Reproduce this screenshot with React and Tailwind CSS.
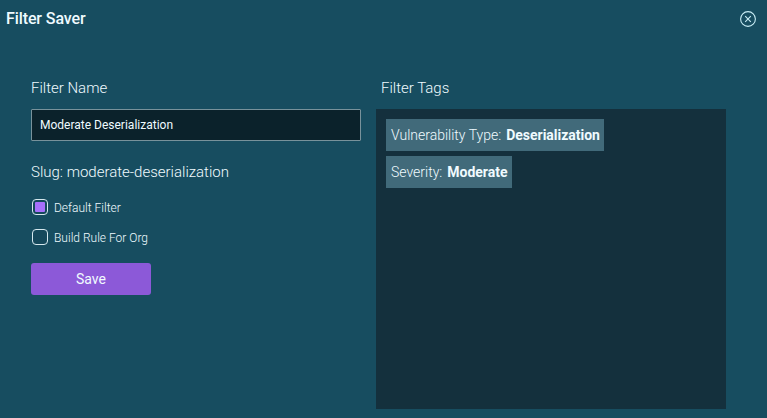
import React from "react";

function Check({ label, checked }) {
  return (
    <label className="flex h-4 items-center gap-1.5 text-[12px]">
      <span className="flex size-4 items-center justify-center rounded-[4px] border border-[#d5e8ee] bg-[#15485b]">
        {checked && <span className="size-[10px] rounded-[1px] bg-[#a76ffb]" />}
      </span>
      <span className="pt-px">{label}</span>
    </label>
  );
}

function Tag({ name, value }) {
  return (
    <div className="flex h-8 items-center gap-[5px] whitespace-nowrap bg-[#416a7a] pl-[5px] pr-[4.5px] text-[14px]">
      <span>{name}:</span>
      <span className="font-bold tracking-[-0.01px]">{value}</span>
    </div>
  );
}

export default function App() {
  return (
    <div className="flex h-[418px] w-[767px] flex-col overflow-hidden bg-[#174d60] font-['Roboto','Liberation_Sans',sans-serif] font-light text-[#f0fbff]">
      <header className="flex h-[38px] items-center justify-between pl-1.5 pr-[11px]">
        <h1 className="text-[16px] font-medium tracking-[-0.1px]">Filter Saver</h1>
        <svg className="size-4" viewBox="0 0 16 16" fill="none" stroke="#c9edf5" strokeWidth="1.1">
          <circle cx="8" cy="8" r="7.4" />
          <path d="M5.2 5.2l5.6 5.6M10.8 5.2l-5.6 5.6" />
        </svg>
      </header>
      <main className="flex pl-[31px] pt-[38px]">
        <section className="w-[330px]">
          <h2 className="h-[33px] text-[15px] leading-6">Filter Name</h2>
          <input
            className="block h-8 w-full rounded-[1px] border border-[#78929b] bg-[#0b222b] px-2 text-[12px] font-normal outline-none"
            defaultValue="Moderate Deserialization"
          />
          <p className="mt-[19px] text-[15px] leading-6">Slug: moderate-deserialization</p>
          <div className="mt-[15px] flex flex-col gap-[14px] pl-px">
            <Check label="Default Filter" checked />
            <Check label="Build Rule For Org" />
          </div>
          <button className="mt-[18px] block h-8 w-[120px] rounded-[3px] bg-[#8c59d8] text-[14px] font-normal">Save</button>
        </section>
        <section className="ml-[15px] w-[350px]">
          <h2 className="h-[33px] pl-[5px] text-[15px] leading-6">Filter Tags</h2>
          <div className="flex h-[300px] flex-col items-start gap-[5px] bg-[#14303d] p-[10px]">
            <Tag name="Vulnerability Type" value="Deserialization" />
            <Tag name="Severity" value="Moderate" />
          </div>
        </section>
      </main>
    </div>
  );
}
